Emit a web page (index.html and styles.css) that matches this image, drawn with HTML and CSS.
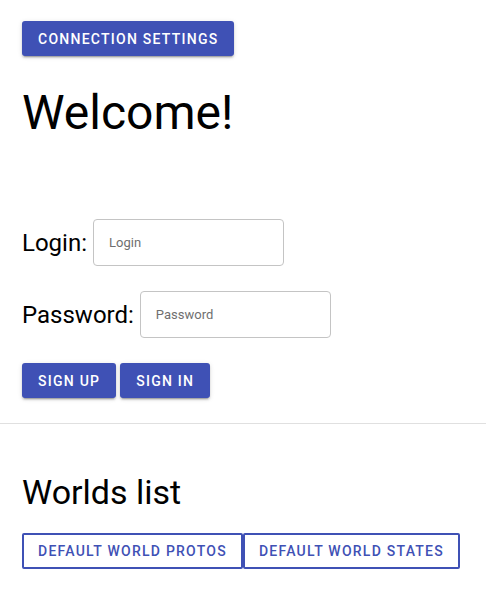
FILE: index.html
```html
<!DOCTYPE html>
<html>
<head>
<meta charset="utf-8">
<link rel="stylesheet" href="styles.css">
</head>
<body>
<div class="page">
  <section class="auth">
    <div class="top-row">
      <button class="btn btn-contained">Connection settings</button>
    </div>
    <h1 class="title">Welcome!</h1>
    <div class="field field-login">
      <label class="field-label" for="login">Login:</label>
      <input class="field-input" id="login" type="text" placeholder="Login">
    </div>
    <div class="field field-password">
      <label class="field-label" for="password">Password:</label>
      <input class="field-input" id="password" type="password" placeholder="Password">
    </div>
    <div class="actions">
      <button class="btn btn-contained">Sign up</button>
      <button class="btn btn-contained">Sign in</button>
    </div>
  </section>
  <hr class="divider">
  <section class="worlds">
    <h2 class="subtitle">Worlds list</h2>
    <div class="world-actions">
      <button class="btn btn-outlined">Default world protos</button><button class="btn btn-outlined">Default world states</button>
    </div>
  </section>
</div>
</body>
</html>
```

FILE: styles.css
```css
html, body {
  margin: 0;
  padding: 0;
  background: #ffffff;
}

body {
  font-family: Roboto, "Liberation Sans", sans-serif;
  color: #000000;
}

.page {
  display: flex;
  flex-direction: column;
}

.auth {
  padding: 21px 22px 0;
  display: flex;
  flex-direction: column;
}

.top-row {
  display: flex;
}

.btn {
  font-family: Roboto, "Liberation Sans", sans-serif;
  font-size: 14px;
  font-weight: 500;
  letter-spacing: 1.25px;
  text-transform: uppercase;
  line-height: 23px;
  border-radius: 3px;
  cursor: pointer;
  box-sizing: border-box;
}

.btn-contained {
  background: #3f51b5;
  color: #ffffff;
  border: none;
  padding: 6px 16px 5px;
  height: 35px;
  box-shadow: 0 3px 1px -2px rgba(0,0,0,0.2), 0 2px 2px 0 rgba(0,0,0,0.14), 0 1px 5px 0 rgba(0,0,0,0.12);
}

.title {
  margin: 29px 0 0;
  font-size: 48px;
  font-weight: 400;
  line-height: 56px;
}

.field {
  display: flex;
  align-items: center;
  gap: 6px;
}

.field-login {
  margin-top: 78px;
}

.field-password {
  margin-top: 25px;
}

.field-label {
  font-size: 24px;
  line-height: 28px;
}

.field-input {
  width: 191px;
  height: 47px;
  box-sizing: border-box;
  border: 1px solid #c4c4c4;
  border-radius: 4px;
  padding: 0 15px;
  font-family: Roboto, "Liberation Sans", sans-serif;
  font-size: 13px;
  color: #000;
  outline: none;
}

.field-input::placeholder {
  color: #6f6f6f;
}

.actions {
  display: flex;
  gap: 4px;
  margin-top: 25px;
}

.divider {
  margin: 25px 0 0;
  border: none;
  border-top: 1px solid #e0e0e0;
  height: 0;
}

.worlds {
  padding: 0 22px;
  display: flex;
  flex-direction: column;
}

.subtitle {
  margin: 47px 0 0;
  font-size: 34px;
  font-weight: 400;
  line-height: 42px;
}

.world-actions {
  display: flex;
  margin-top: 20px;
}

.btn-outlined {
  background: #ffffff;
  color: #3f51b5;
  border: 2px solid #3f51b5;
  padding: 4px 14px;
  height: 36px;
  border-radius: 2px;
}
```
